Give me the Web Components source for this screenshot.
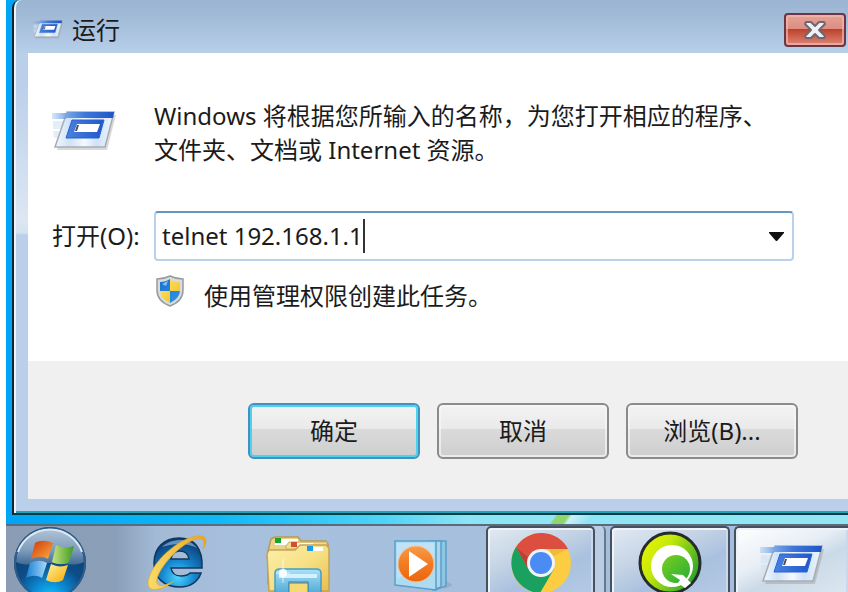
<!DOCTYPE html>
<html lang="zh-CN">
<head>
<meta charset="utf-8">
<title>运行</title>
<style>
  html, body {
    height: 100%;
    margin: 0;
  }
  body {
    background: #fff;
    overflow: hidden;
    color: #1b1b1b;
    font: 24px/34px "Noto Sans", "Noto Sans CJK SC", sans-serif;
  }
</style>
</head>
<body>
<win-desktop>
  <run-dialog slot="window" heading="运行">
    Windows 将根据您所输入的名称，为您打开相应的程序、<br>文件夹、文档或 Internet 资源。
    <dialog-button slot="actions" primary>确定</dialog-button>
    <dialog-button slot="actions">取消</dialog-button>
    <dialog-button slot="actions">浏览(B)...</dialog-button>
  </run-dialog>
  <task-bar slot="taskbar"></task-bar>
</win-desktop>

<script>
/**
 * Base class: clones a template string into an open shadow root.
 */
class BaseElement extends HTMLElement {
  constructor() {
    super();
    this.attachShadow({ mode: "open" });
    this.shadowRoot.innerHTML = this.template();
  }

  template() {
    return "";
  }
}

/** Desktop background with a window slot and a taskbar slot. */
class WinDesktop extends BaseElement {
  template() {
    return `
      <style>
        :host {
          display: grid;
          grid-template-rows: auto 1fr;
          gap: 9px;
          height: 100%;
          margin-left: 6px;
          overflow: hidden;
          background:
            linear-gradient(125deg, transparent 46%, #8fd66c 47%, #8fd66c 53%, #cdeff8 55%, transparent 66%) 464px 515px / 180px 9px no-repeat,
            linear-gradient(90deg, #00a4f4, #0fb9f6 25%, #4fd4f6 45%, #8de4f4 55%, #93e7f3);
        }
        .window {
          padding-left: 6px;
        }
      </style>
      <div class="window"><slot name="window"></slot></div>
      <slot name="taskbar"></slot>
    `;
  }
}

/** Icon of the Run program, used in the title, the dialog and the taskbar. */
class RunIcon extends BaseElement {
  template() {
    return `
      <style>
        :host {
          display: block;
          width: 64px;
          flex: none;
        }
        svg {
          display: block;
          width: 100%;
        }
      </style>
      <svg viewBox="0 0 64 44" aria-hidden="true">
        <defs>
          <linearGradient id="trail" x1="0" x2="1">
            <stop offset="0" stop-color="#8db9ee" stop-opacity=".35"/>
            <stop offset="1" stop-color="#6f9fe2"/>
          </linearGradient>
          <linearGradient id="bar" x1="0" x2="1">
            <stop offset="0" stop-color="#7da9e6"/>
            <stop offset=".4" stop-color="#3f78d8"/>
            <stop offset="1" stop-color="#1d55c8"/>
          </linearGradient>
          <linearGradient id="sheet" x1="0" x2="1">
            <stop offset="0" stop-color="#f3f8fd"/>
            <stop offset=".25" stop-color="#cfe2f7"/>
            <stop offset=".5" stop-color="#f4f9fe"/>
            <stop offset=".7" stop-color="#cfe2f8"/>
            <stop offset="1" stop-color="#f0f6fc"/>
          </linearGradient>
          <linearGradient id="box" x1="0" x2="1">
            <stop offset="0" stop-color="#4a82df"/>
            <stop offset="1" stop-color="#1f57cb"/>
          </linearGradient>
        </defs>
        <path d="M1 12h14l-3 8H1zM1 22h9l-2 7H2z" fill="#cfe2f6" opacity=".6"/>
        <path d="M17 6h47l-9 35H5z" fill="#777" opacity=".28"/>
        <path d="M15 3h47l-9 35H3z" fill="url(#sheet)" stroke="#a9adb3" stroke-width="1.5"/>
        <path d="M0 4h16l-2 6H0z" fill="url(#trail)"/>
        <path d="M15 3h47l-1 6H13z" fill="url(#bar)"/>
        <path d="M20 11h32l-5 18H14z" fill="url(#box)" stroke="#2b62cf"/>
        <path d="M25 15h23l-3 8H22z" fill="#fff"/>
        <path d="M25 16h2l-2 6h-2z" fill="#4b5058"/>
      </svg>
    `;
  }
}

/** Push button of a dialog. The primary attribute gives the glowing frame. */
class DialogButton extends BaseElement {
  template() {
    return `
      <style>
        :host {
          display: block;
          flex: 0 0 172px;
        }
        button {
          width: 100%;
          height: 56px;
          padding: 0;
          border: 2px solid #8b8b8b;
          border-radius: 6px;
          background: linear-gradient(#f3f3f3, #e9e9e9 47%, #dadada 47%, #cecece);
          box-shadow: inset 0 0 0 2px #f8f8f8aa;
          color: inherit;
          font: inherit;
        }
        :host([primary]) button {
          border-color: #4291bf;
          box-shadow: inset 0 0 0 2px #4fd0ef;
        }
      </style>
      <button type="button"><slot></slot></button>
    `;
  }
}

/** Editable text field with a drop-down arrow. */
class ComboBox extends BaseElement {
  template() {
    return `
      <style>
        :host {
          display: grid;
          grid-template-columns: 102px 1fr;
          align-items: center;
        }
        .field {
          display: flex;
          align-items: center;
          height: 46px;
          border: 2px solid #b9d1e9;
          border-top-color: #6398c2;
          border-radius: 4px;
          background: #fff;
        }
        input {
          field-sizing: content;
          padding: 0 0 0 6px;
          border: 0;
          outline: 0;
          background: none;
          color: inherit;
          font: inherit;
        }
        .caret {
          width: 2px;
          height: 34px;
          background: #333;
        }
        button {
          display: flex;
          margin-left: auto;
          padding: 8px;
          border: 0;
          background: none;
        }
      </style>
      <label for="command">打开(O):</label>
      <div class="field">
        <input id="command" type="text" value="telnet 192.168.1.1" autocomplete="off" spellcheck="false">
        <span class="caret"></span>
        <button type="button" aria-label="▼">
          <svg width="15" height="9" viewBox="0 0 15 9"><path d="M0 0h15v1L8 9H7L0 1z" fill="#111"/></svg>
        </button>
      </div>
    `;
  }
}

/** Shield with its note on the rights the task gets. */
class ShieldNote extends BaseElement {
  template() {
    return `
      <style>
        :host {
          display: flex;
          align-items: start;
          gap: 20px;
        }
        svg {
          display: block;
          flex: none;
        }
        span {
          padding-top: 4px;
        }
      </style>
      <svg width="28" height="32" viewBox="0 0 28 32" aria-hidden="true">
        <defs>
          <clipPath id="inner"><path d="M14 4c3 2 6 3 10 3v8c0 6-4 10-10 13C8 25 4 21 4 15V7c4 0 7-1 10-3z"/></clipPath>
          <linearGradient id="yellow" x2="1" y2="1"><stop stop-color="#fff08a"/><stop offset="1" stop-color="#f0b400"/></linearGradient>
          <linearGradient id="blue" x2="1" y2="1"><stop stop-color="#1b66c8"/><stop offset="1" stop-color="#2fa0ef"/></linearGradient>
        </defs>
        <path d="M14 1c4 2 8 3 13 3v11c0 8-5 13-13 16C6 28 1 23 1 15V4c5 0 9-1 13-3z" fill="#d9dbdc" stroke="#979b9e" stroke-width="1.5"/>
        <g clip-path="url(#inner)">
          <path d="M0 0h14v16H0zM14 16h14v16H14z" fill="url(#blue)"/>
          <path d="M14 0h14v16H14zM0 16h14v16H0z" fill="url(#yellow)"/>
          <path d="M6 9l6-3-2 5z" fill="#9bd4f7" opacity=".8"/>
        </g>
      </svg>
      <span><slot></slot></span>
    `;
  }
}

/**
 * Run dialog. The default slot is the introduction,
 * the actions slot takes the buttons of the footer.
 */
class RunDialog extends BaseElement {
  static get observedAttributes() {
    return ["heading"];
  }

  attributeChangedCallback(name, oldValue, newValue) {
    this.shadowRoot.querySelector("h1").textContent = newValue;
  }

  template() {
    return `
      <style>
        :host {
          display: block;
          border-left: 2px solid #14242f;
          border-bottom: 2px solid #073a44;
          border-top-left-radius: 8px;
          box-shadow: inset 2px 0 #eef3f8, inset 0 -2px #1fa5b8;
          padding: 0 0 14px 14px;
          background:
            linear-gradient(#9ab4d2, #a3bcd8 20px, #b8cfea 53px, transparent 53px),
            linear-gradient(#b9cfea 80px, #dde7f3 220px, #d3e1f1 233px, #b9cfea 235px);
        }
        header {
          display: flex;
          align-items: center;
          height: 53px;
          padding: 6px 2px 0 5px;
          box-sizing: border-box;
        }
        header run-icon {
          width: 30px;
          margin-right: 9px;
        }
        h1 {
          margin: 0;
          font: inherit;
        }
        .close {
          display: flex;
          align-items: center;
          justify-content: center;
          width: 62px;
          height: 34px;
          margin-left: auto;
          padding: 0;
          border: 2px solid #6b3546;
          border-radius: 4px;
          background: linear-gradient(#e7a297, #dc8d80 47%, #bd4029 47%, #c95843 65%, #dd8578);
          box-shadow: inset 0 0 0 2px #eebdb0aa;
        }
        .body {
          padding: 46px 54px 48px 24px;
          background: #fff;
        }
        .intro {
          display: grid;
          grid-template-columns: 102px 1fr;
          margin-bottom: 44px;
        }
        .intro run-icon {
          margin-top: 10px;
        }
        .intro p {
          margin: 0;
        }
        shield-note {
          margin: 14px 0 0 104px;
        }
        footer {
          display: flex;
          justify-content: flex-end;
          gap: 17px;
          padding: 42px 50px 40px;
          background: #f0f0f0;
        }
      </style>
      <header>
        <run-icon></run-icon>
        <h1></h1>
        <button class="close" type="button" aria-label="关闭">
          <svg width="24" height="20" viewBox="0 0 24 20">
            <path d="M3 2h5l4 4 4-4h5l1 2-6 6 6 6-1 2h-5l-4-4-4 4H3l-1-2 6-6-6-6z" fill="#f1f1f1" stroke="#6b6877" stroke-width="2" stroke-linejoin="round"/>
          </svg>
        </button>
      </header>
      <div class="body">
        <div class="intro">
          <run-icon></run-icon>
          <p><slot></slot></p>
        </div>
        <combo-box></combo-box>
        <shield-note>使用管理权限创建此任务。</shield-note>
      </div>
      <footer><slot name="actions"></slot></footer>
    `;
  }
}

/** One entry of the taskbar; open gives it a frame, stacked a second edge. */
class TaskItem extends BaseElement {
  template() {
    return `
      <style>
        :host {
          display: block;
          flex: 0 0 122px;
        }
        button {
          display: flex;
          justify-content: center;
          width: 100%;
          height: 100%;
          padding: 5px 0 0;
          border: 0;
          background: none;
        }
        :host([start]) {
          flex-basis: 88px;
          margin-right: 21px;
        }
        :host([open]) {
          flex-basis: 120px;
          margin-right: 4px;
        }
        :host([open]) button {
          border: 2px solid #46515f;
          border-bottom: 0;
          border-radius: 5px 5px 0 0;
          padding-top: 3px;
          background: linear-gradient(155deg, #e2eaf3, #c3d2e4 40%, #a9c1df 65%, #b4c9e4);
          box-shadow: inset 2px 2px #eef3f9, inset -2px 0 #c9d8ea;
        }
        :host([stacked]) {
          box-sizing: border-box;
          margin-left: 5px;
          padding-right: 9px;
          border-right: 2px solid #66788e;
          border-radius: 0 5px 0 0;
          background: #bacde4;
        }
        :host([active]) {
          flex: 1 0 113px;
          margin-right: 0;
        }
        :host([active]) button {
          border-right: 0;
          border-radius: 5px 0 0 0;
          background: linear-gradient(155deg, #fff, #e8eef5 40%, #cbdae8 60%, #dbe6f0);
        }
      </style>
      <button type="button"><slot></slot></button>
    `;
  }
}

class TaskBar extends BaseElement {
  template() {
    return `
      <style>
        :host {
          display: flex;
          align-items: stretch;
          min-height: 0;
          overflow: hidden;
          border-top: 2px solid #5b6b7c;
          background: linear-gradient(90deg, #8b9db5, #8a9fb9 110px, #a3bad6 150px, #a7c0de 240px, #a4bddb);
        }
        svg {
          display: block;
          flex: none;
        }
        .orb {
          margin-top: -5px;
        }
        task-item run-icon {
          margin-top: 12px;
        }
      </style>

      <task-item start>
        <svg class="orb" width="74" height="74" viewBox="0 0 74 74" aria-hidden="true">
          <defs>
            <radialGradient id="orb" cx=".5" cy="1" r=".9">
              <stop offset="0" stop-color="#17c8ff"/>
              <stop offset=".25" stop-color="#0b8fd8"/>
              <stop offset=".55" stop-color="#0c4d87"/>
              <stop offset="1" stop-color="#123b66"/>
            </radialGradient>
            <linearGradient id="gloss" x2="0" y2="1">
              <stop offset="0" stop-color="#b3c5d8"/>
              <stop offset=".6" stop-color="#7f9dbc"/>
              <stop offset="1" stop-color="#406b97"/>
            </linearGradient>
            <linearGradient id="red" x2="1" y2="1"><stop stop-color="#d0350c"/><stop offset="1" stop-color="#fbb040"/></linearGradient>
            <linearGradient id="green" x2="1"><stop stop-color="#c6e37f"/><stop offset="1" stop-color="#3f9a22"/></linearGradient>
            <linearGradient id="sky" x2="1"><stop stop-color="#1b7fd4"/><stop offset="1" stop-color="#a5daf8"/></linearGradient>
            <linearGradient id="gold" x2="1" y2="1"><stop stop-color="#fff1a0"/><stop offset="1" stop-color="#f7a900"/></linearGradient>
          </defs>
          <circle cx="37" cy="37" r="36" fill="url(#orb)"/>
          <path d="M3 36a34 34 0 0 1 68 0c-10 5-22 1-34 1S13 41 3 36z" fill="url(#gloss)"/>
          <circle cx="37" cy="37" r="35" fill="none" stroke="#2e5d8b" stroke-width="2"/>
          <path d="M5 26a34 34 0 0 1 64 0" fill="none" stroke="#dbe7f2" stroke-width="2"/>
          <path d="M22 17c5-3 11-3 18 0l-5 16c-5-3-11-3-17 0z" fill="url(#red)"/>
          <path d="M43 19c6 3 12 3 18 1l-5 16c-5 3-11 3-17 0z" fill="url(#green)"/>
          <path d="M17 37c6-3 12-3 17 0l-5 15c-5-3-10-3-16 0z" fill="url(#sky)"/>
          <path d="M38 38c6 3 11 3 17 1l-5 15c-5 3-11 3-17 0z" fill="url(#gold)"/>
        </svg>
      </task-item>

      <task-item>
        <svg width="64" height="64" viewBox="0 0 64 64" aria-hidden="true">
          <defs>
            <radialGradient id="ie" cx=".5" cy=".8" r=".75">
              <stop offset="0" stop-color="#49d5ff"/>
              <stop offset=".45" stop-color="#1686cf"/>
              <stop offset="1" stop-color="#0b3f77"/>
            </radialGradient>
            <linearGradient id="ring" x2="1">
              <stop offset="0" stop-color="#f7dc6a"/>
              <stop offset="1" stop-color="#eda31c"/>
            </linearGradient>
          </defs>
          <path fill-rule="evenodd" d="M58 37H27c1 6 5 8 10 8 5 0 7-1 9-3h11c-3 9-11 14-21 14C20 56 10 47 10 32S20 7 35 7s24 10 23 30zM27 28h18c-1-6-4-8-9-8s-8 2-9 8z" fill="url(#ie)" stroke="#12375d" stroke-width="1.5"/>
          <path d="M18 16c6-6 13-7 20-7 6 0 11 3 15 8-10-5-22-5-35-1z" fill="#afd2ed" opacity=".55"/>
          <path d="M59 18c5-8 4-14-5-13C38 6 13 26 6 44c-4 10-2 17 9 14 5-1 10-4 15-8-8 4-15 7-17 2C10 43 33 14 52 8c9-2 9 4 7 10z" fill="url(#ring)" stroke="#dda62b" stroke-width=".7"/>
        </svg>
      </task-item>

      <task-item>
        <svg width="64" height="64" viewBox="0 0 64 64" aria-hidden="true">
          <defs>
            <linearGradient id="folder" x2="1" y2="1">
              <stop offset="0" stop-color="#fbefaa"/>
              <stop offset=".5" stop-color="#f7e185"/>
              <stop offset="1" stop-color="#e9bd4c"/>
            </linearGradient>
            <linearGradient id="stand" x2="0" y2="1">
              <stop offset="0" stop-color="#a9e2f8"/>
              <stop offset="1" stop-color="#4ba7d4"/>
            </linearGradient>
          </defs>
          <path d="M2 20l3-12 4-2h23l3 4h25l2 3v40H2z" fill="#ead384" stroke="#b89a55" stroke-width="1.5"/>
          <path d="M9 8h23v6H9z" fill="#fff"/>
          <path d="M9 7h6v5H9z" fill="#17a52c"/>
          <path d="M20 15l3-4h38v7H20z" fill="#f3dd93" stroke="#c9aa63"/>
          <path d="M25 12h22v4H25z" fill="#fff"/>
          <path d="M25 11h6v5h-6z" fill="#d4502a"/>
          <path d="M1 23l2-4h26l5-5h26l3 3v43H3z" fill="url(#folder)" stroke="#c2a358" stroke-width="1.5"/>
          <path d="M41 16h16v4H41z" fill="#fff"/>
          <path d="M41 15h6v5h-6z" fill="#189be8"/>
          <path d="M9 64V42q0-4 5-4h36q5 0 5 4v22H42V51H23v13z" fill="url(#stand)" stroke="#4b9cc5" stroke-width="1.5"/>
          <path d="M13 45h38" stroke="#d5f2fc" stroke-width="4"/>
          <path d="M23 52h19v12H23z" fill="#f5da75" stroke="#49839c"/>
          <path d="M17 28v24M10 42h14" stroke="#fff" opacity=".7"/>
          <circle cx="17" cy="42" r="4" fill="#fff" opacity=".9"/>
        </svg>
      </task-item>

      <task-item>
        <svg width="64" height="64" viewBox="0 0 64 64" aria-hidden="true">
          <defs>
            <linearGradient id="orange" x2="0" y2="1">
              <stop offset="0" stop-color="#f79c4a"/>
              <stop offset=".5" stop-color="#f37b1f"/>
              <stop offset="1" stop-color="#ea6612"/>
            </linearGradient>
          </defs>
          <path d="M47 10h11v45l-11 4z" fill="#8dc5e4" stroke="#5d9fc5" stroke-width="1.5"/>
          <path d="M42 10h11v46l-8 3z" fill="#a8d7ef" stroke="#5d9fc5" stroke-width="1.5"/>
          <path d="M7 10h41v49L7 54z" fill="#addbf2" stroke="#5d9fc5" stroke-width="1.5"/>
          <path d="M9 12h37v15L9 48z" fill="#c9e6f6" opacity=".7"/>
          <path d="M58 50l7 4-9 4z" fill="#7d95b2" opacity=".4"/>
          <circle cx="28" cy="33" r="18" fill="url(#orange)" stroke="#f6c69d"/>
          <path d="M21 20v26l19-13z" fill="#fff"/>
        </svg>
      </task-item>

      <task-item open stacked>
        <svg width="64" height="64" viewBox="0 0 64 64" aria-hidden="true">
          <circle cx="32" cy="32" r="30" fill="#fccd43"/>
          <path d="M32 32L7 16A30 30 0 0 0 31 62L45 38z" fill="#1aa15f"/>
          <path d="M32 18h27A30 30 0 0 0 7 16l12 22z" fill="#dc4e40"/>
          <path d="M40 18h19l-16 8z" fill="#d9a82e" opacity=".45"/>
          <path d="M8 17l11 20 2-9z" fill="#8d2f27" opacity=".4"/>
          <circle cx="32" cy="32" r="14" fill="#f1f3f5"/>
          <circle cx="32" cy="32" r="11" fill="#4b8bf4"/>
        </svg>
      </task-item>

      <task-item open>
        <svg width="64" height="64" viewBox="0 0 64 64" aria-hidden="true">
          <defs>
            <linearGradient id="lime" x1="0" y1=".2" x2="1" y2=".8">
              <stop offset="0" stop-color="#e8f400"/>
              <stop offset=".35" stop-color="#c3e90c"/>
              <stop offset="1" stop-color="#159b2d"/>
            </linearGradient>
            <linearGradient id="leaf" x2="1" y2="1">
              <stop offset="0" stop-color="#79cf20"/>
              <stop offset="1" stop-color="#28ac36"/>
            </linearGradient>
          </defs>
          <circle cx="32" cy="32" r="30" fill="url(#lime)" stroke="#262b2c" stroke-width="3"/>
          <circle cx="34" cy="35" r="21" fill="#fff"/>
          <circle cx="38" cy="38" r="14" fill="url(#leaf)"/>
          <path d="M33 43l12 1 8 8-6 5-7-5 2-3z" fill="#fff"/>
        </svg>
      </task-item>

      <task-item open active>
        <run-icon></run-icon>
      </task-item>
    `;
  }
}

customElements.define("run-icon", RunIcon);
customElements.define("dialog-button", DialogButton);
customElements.define("combo-box", ComboBox);
customElements.define("shield-note", ShieldNote);
customElements.define("run-dialog", RunDialog);
customElements.define("task-item", TaskItem);
customElements.define("task-bar", TaskBar);
customElements.define("win-desktop", WinDesktop);
</script>
</body>
</html>
